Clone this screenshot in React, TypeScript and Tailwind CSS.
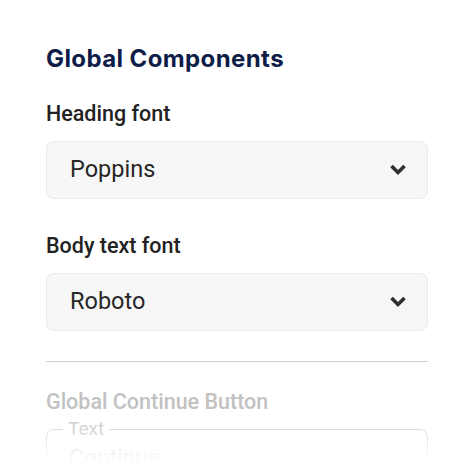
import { useState } from "react";

const fonts = ["Poppins", "Roboto", "Inter", "Lato", "Open Sans"];

function Chevron() {
  return (
    <svg width="16" height="12" viewBox="0 0 16 12" className="shrink-0">
      <path d="M1.5 2 L8 8.5 L14.5 2" fill="none" stroke="#2f2f2f" strokeWidth="3.6" strokeLinejoin="miter" />
    </svg>
  );
}

function FontSelect({ label, value }: { label: string; value: string }) {
  const [current] = useState(value);
  return (
    <div>
      <div className="text-[21.5px] leading-[24px] font-medium text-[#222]">{label}</div>
      <button className="mt-[15px] flex h-[58px] w-full items-center justify-between rounded-lg border border-[#ebebeb] bg-[#f7f7f7] pl-[23px] pr-[21px] text-left">
        <span className="text-[23.5px] text-[#262626]">{current}</span>
        <Chevron />
      </button>
    </div>
  );
}

export default function App() {
  return (
    <div className="relative h-[463px] w-[466px] overflow-hidden bg-white pl-[46px] pr-[38px] pt-[43px] font-['Roboto',sans-serif]">
      <h2 className="text-[24px] leading-[32px] font-bold tracking-[0.4px] text-[#0e1d48] font-['Inter',sans-serif]">
        Global Components
      </h2>
      <div className="mt-[27px]">
        <FontSelect label="Heading font" value={fonts[0]} />
      </div>
      <div className="mt-[35px]">
        <FontSelect label="Body text font" value={fonts[1]} />
      </div>
      <div className="mt-[30px] h-px bg-[#cfcfcf]" />
      <div className="mt-[28px] text-[21.5px] leading-[24px] font-medium text-[#c2c2c2]">
        Global Continue Button
      </div>
      <fieldset className="mt-[5px] h-[70px] rounded-lg border border-[#d4d4d4] px-[16px]">
        <legend className="px-[5px] text-[19px] leading-[20px] text-[#cfcfcf]">Text</legend>
        <div className="mt-[6px] pl-[6px] text-[23px] leading-[28px] text-[#d0d0d0]">Continue</div>
      </fieldset>
      <div className="pointer-events-none absolute inset-x-0 bottom-0 h-[40px] bg-gradient-to-b from-white/0 to-white" />
    </div>
  );
}
